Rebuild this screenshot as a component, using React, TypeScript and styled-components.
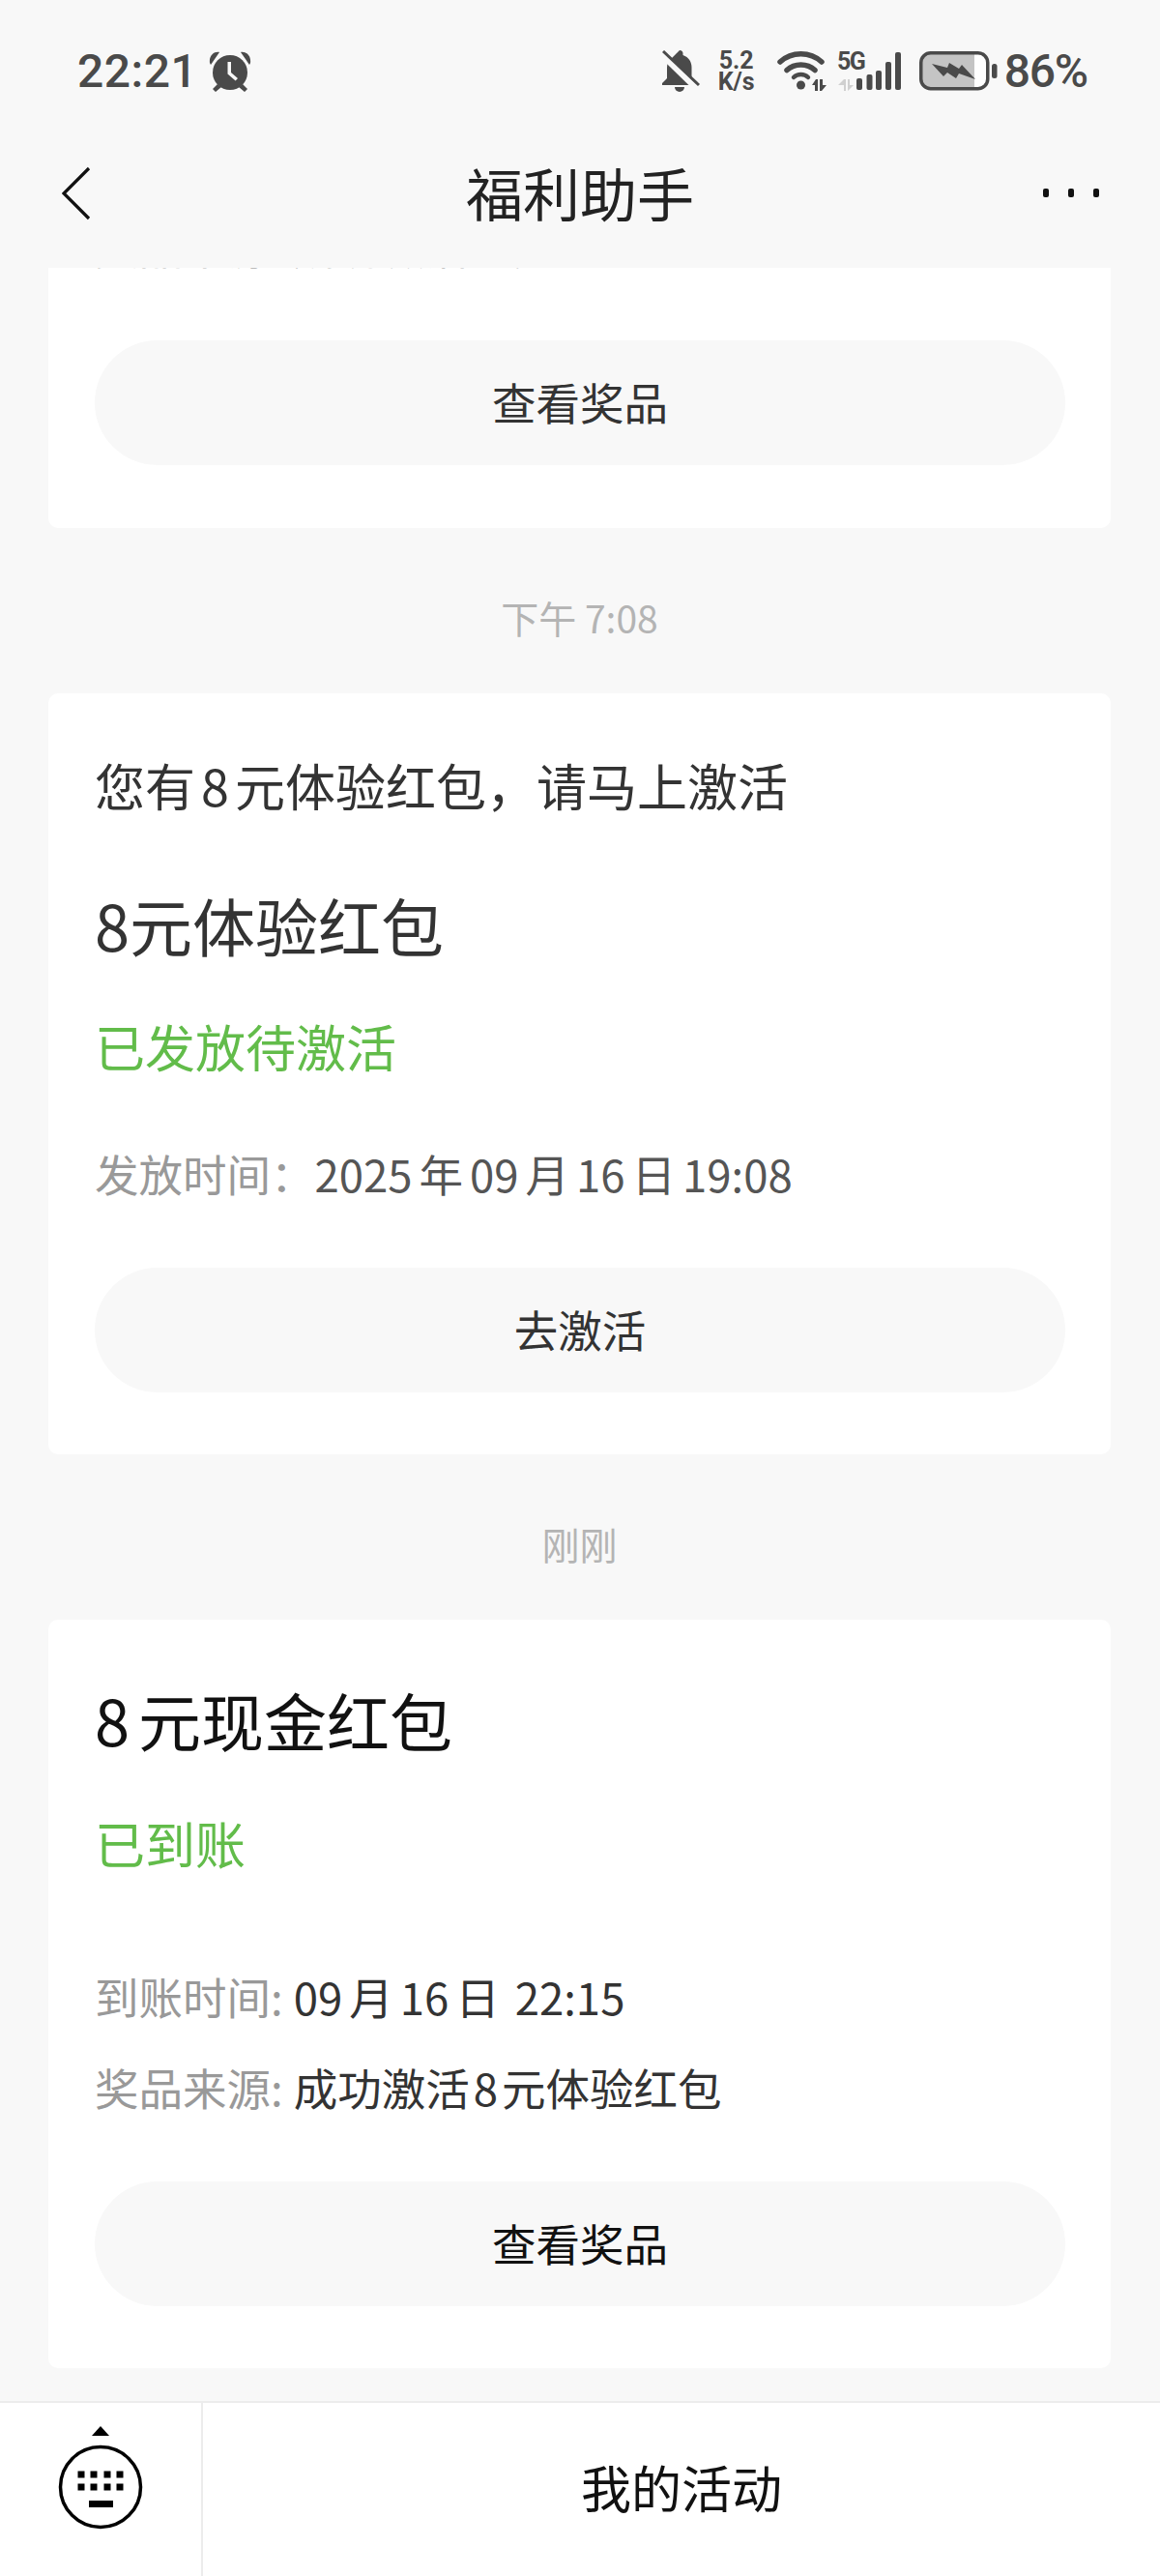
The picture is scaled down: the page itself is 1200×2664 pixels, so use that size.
import React from "react";
import styled, { createGlobalStyle } from "styled-components";

const Global = createGlobalStyle`
  html, body { margin: 0; padding: 0; background: #f8f8f8; }
  * { box-sizing: border-box; }
`;

const CJK = `"Noto Sans CJK SC", "Noto Sans", sans-serif`;
const NUM = `Roboto, "Noto Sans CJK SC", sans-serif`;

const Page = styled.div`
  width: 1200px;
  height: 2664px;
  display: flex;
  flex-direction: column;
  overflow: hidden;
  background: #f8f8f8;
  font-family: ${CJK};
`;
const StatusBar = styled.div`
  height: 147px;
  flex: none;
  display: flex;
  align-items: center;
  justify-content: space-between;
  padding: 0 75px 0 80px;
  color: #4a4a4a;
`;
const StatusGroup = styled.div`
  display: flex;
  align-items: center;
`;
const StatusItem = styled.div<{ $ml: number }>`
  display: flex;
  margin-left: ${(p) => p.$ml}px;
`;
const Clock = styled.span`
  font: 500 48px/1 ${NUM};
  letter-spacing: 0.5px;
`;
const Percent = styled.span`
  font: 500 48px/1 ${NUM};
  letter-spacing: -1.2px;
`;
const Speed = styled.div`
  width: 42px;
  display: flex;
  flex-direction: column;
  align-items: center;
  font: 700 25px/22px ${NUM};
`;
const NavBar = styled.div`
  height: 130px;
  flex: none;
  display: grid;
  grid-template-columns: 1fr auto 1fr;
  align-items: center;
  padding: 0 62px 26px;
`;
const NavStart = styled.div`
  display: flex;
  padding: 2px 0 0 2px;
`;
const NavEnd = styled.div`
  display: flex;
  justify-content: flex-end;
  padding-top: 2px;
`;
const NavTitle = styled.div`
  font-size: 59px;
  line-height: 76px;
  color: #222;
`;
const Feed = styled.div`
  flex: 1;
  min-height: 0;
  overflow: hidden;
  padding: 0 51px 0 50px;
`;
const Card = styled.div<{ $top: number }>`
  background: #fff;
  border-radius: 10px;
  padding: ${(p) => p.$top}px 47px 64px 48px;
`;
const TopCard = styled(Card)`
  border-radius: 0 0 10px 10px;
  padding-bottom: 65px;
`;
const Clipped = styled.div`
  height: 3px;
  margin-bottom: 72px;
  overflow: hidden;
  display: flex;
  align-items: flex-end;
  font-size: 45.5px;
  line-height: 51px;
  color: #bbb;
  white-space: nowrap;
`;
const Stamp = styled.div`
  margin: 62px 0 49px;
  text-align: center;
  font-size: 39px;
  line-height: 60px;
  color: #b4b4b4;
`;
const Gap = styled.span<{ $w: number }>`
  display: inline-block;
  width: ${(p) => p.$w}px;
`;
const Lead = styled.div`
  font-size: 52px;
  line-height: 60px;
  white-space: nowrap;
  color: #333;
`;
const Title = styled.div<{ $mt: number; $dark?: boolean }>`
  margin-top: ${(p) => p.$mt}px;
  font-size: 65px;
  line-height: 80px;
  color: ${(p) => (p.$dark ? "#111" : "#333")};
`;
const Status = styled.div<{ $mt: number }>`
  margin-top: ${(p) => p.$mt}px;
  font-size: 52px;
  line-height: 70px;
  color: #62bc4a;
`;
const Meta = styled.div<{ $mt: number; $dark?: boolean }>`
  margin-top: ${(p) => p.$mt}px;
  font-size: 45.5px;
  line-height: 60px;
  white-space: nowrap;
  color: ${(p) => (p.$dark ? "#333" : "#555")};
`;
const MetaLabel = styled.span`
  color: #999;
`;
const Action = styled.div<{ $mt: number; $dark?: boolean }>`
  margin-top: ${(p) => p.$mt}px;
  height: 129px;
  border-radius: 65px;
  background: #f8f8f8;
  display: flex;
  align-items: center;
  justify-content: center;
  padding-bottom: 4px;
  font-size: 45.5px;
  color: ${(p) => (p.$dark ? "#111" : "#333")};
`;
const BottomBar = styled.div`
  height: 181px;
  flex: none;
  display: flex;
  background: #fff;
  border-top: 2px solid #ececec;
`;
const KeyboardCell = styled.div`
  width: 210px;
  flex: none;
  display: flex;
  justify-content: center;
  padding-top: 24px;
  border-right: 2px solid #ececec;
`;
const MenuCell = styled.div`
  flex: 1;
  display: flex;
  align-items: center;
  justify-content: center;
  padding-bottom: 6px;
  font-size: 52px;
  color: #111;
`;

const AlarmIcon = () => (
  <svg width="44" height="44" viewBox="0 0 44 44" fill="#4a4a4a">
    <path d="M1 13C0 5 6 1 11 2L2 15ZM43 13C44 5 38 1 33 2L42 15Z" />
    <circle cx="22" cy="23" r="18" />
    <path d="M9 35l-5 5 3 3 6-5zM35 35l5 5-3 3-6-5z" />
    <path d="M19.5 12h3.5v11l7 6-2.4 2.4-8.100-7z" fill="#f8f8f8" />
  </svg>
);
const BellOff = () => (
  <svg width="40" height="44" viewBox="0 0 40 44" fill="#4a4a4a">
    <path d="M18 0a3.500 3.500 0 0 1 3.500 3.500V5c6 2 9 7 9 13v11l5 5v2H0v-2l5-5V18c0-2 .4-4 1-6z" />
    <path d="M13 38h10a5 5 0 0 1-10 0z" />
    <path d="M-1 4l37 36" stroke="#f8f8f8" strokeWidth="6" />
    <path d="M1 1l37 35" stroke="#4a4a4a" strokeWidth="3" />
  </svg>
);
const Wifi = () => (
  <svg width="52" height="42" viewBox="0 0 52 42" fill="none">
    <path d="M3 11C15 0 34 0 46 11" stroke="#4a4a4a" strokeWidth="5.500" strokeLinecap="round" />
    <path d="M10 19.500C18 12 31 12 39 19.500" stroke="#4a4a4a" strokeWidth="5.500" strokeLinecap="round" />
    <path d="M17 27C21 23 28 23 32 27" stroke="#4a4a4a" strokeWidth="4.500" strokeLinecap="round" />
    <circle cx="24.500" cy="35" r="4.500" fill="#4a4a4a" />
    <path d="M36 35l4-6h2v12h-3v-6zM44 29h3v6h4l-5 6h-2z" fill="#4a4a4a" />
  </svg>
);
const Signal = () => (
  <svg width="68" height="42" viewBox="0 0 68 42" fill="#4a4a4a" overflow="visible">
    <text x="0" y="19" fontFamily="Roboto, sans-serif" fontWeight="700" fontSize="25" letterSpacing="-1.500">5G</text>
    <path d="M1 35l6-6h2v12H7v-6zM11 29h2v6h4l-6 6z" fill="#d0d0d0" />
    <rect x="20" y="28" width="6" height="12" rx="2" />
    <rect x="30.500" y="24" width="6" height="16" rx="2" />
    <rect x="40" y="20" width="6" height="20" rx="2" />
    <rect x="50" y="11" width="6" height="29" rx="2" />
    <rect x="60" y="1" width="6" height="39" rx="2" />
  </svg>
);
const Battery = () => (
  <svg width="82" height="42" viewBox="0 0 82 42">
    <rect x="3" y="3" width="67" height="35" rx="8" fill="#fff" />
    <path d="M9 3h48v35H9a6 6 0 0 1-6-6V9a6 6 0 0 1 6-6z" fill="#c4c4c4" />
    <rect x="1.750" y="1.750" width="69" height="37" rx="10" fill="none" stroke="#4a4a4a" strokeWidth="3.500" />
    <rect x="75" y="13" width="5.500" height="15" rx="2.500" fill="#4a4a4a" />
    <path d="M13 13l16 4 2-5 10 6 3-4 14 15-17-6-3 5-9-6-4 4z" fill="#4a4a4a" />
  </svg>
);
const Back = () => (
  <svg width="30" height="56" viewBox="0 0 30 56" fill="none">
    <path d="M28 2L2 28l26 26" stroke="#111" strokeWidth="3.200" />
  </svg>
);
const More = () => (
  <svg width="60" height="10" viewBox="0 0 60 10" fill="#111">
    <rect x="1" y="0" width="6" height="9" rx="2" />
    <rect x="27" y="0" width="6" height="9" rx="2" />
    <rect x="53" y="0" width="6" height="9" rx="2" />
  </svg>
);
const Keyboard = () => (
  <svg width="90" height="108" viewBox="0 0 90 108" fill="#000">
    <path d="M36 10l9-10 9 10z" />
    <circle cx="45" cy="63" r="41.500" fill="none" stroke="#000" strokeWidth="3.500" />
    {[50, 63].map((y) =>
      [25, 38, 52, 65].map((x) => <rect key={`${x}-${y}`} x={x - 3.5} y={y - 3.5} width="7" height="7" />)
    )}
    <rect x="33" y="77" width="25" height="7" />
  </svg>
);

export default function App() {
  return (
    <Page>
      <Global />
      <StatusBar>
        <StatusGroup>
          <Clock>22:21</Clock>
          <StatusItem $ml={12}>
            <AlarmIcon />
          </StatusItem>
        </StatusGroup>
        <StatusGroup>
          <StatusItem $ml={0}>
            <BellOff />
          </StatusItem>
          <StatusItem $ml={16}>
            <Speed>
              <span>5.2</span>
              <span>K/s</span>
            </Speed>
          </StatusItem>
          <StatusItem $ml={21}>
            <Wifi />
          </StatusItem>
          <StatusItem $ml={10}>
            <Signal />
          </StatusItem>
          <StatusItem $ml={17}>
            <Battery />
          </StatusItem>
          <StatusItem $ml={6}>
            <Percent>86%</Percent>
          </StatusItem>
        </StatusGroup>
      </StatusBar>
      <NavBar>
        <NavStart>
          <Back />
        </NavStart>
        <NavTitle>福利助手</NavTitle>
        <NavEnd>
          <More />
        </NavEnd>
      </NavBar>
      <Feed>
        <TopCard $top={0}>
          <Clipped>奖品来源: 成功激活 8 元红包</Clipped>
          <Action $mt={0}>查看奖品</Action>
        </TopCard>
        <Stamp>下午 7:08</Stamp>
        <Card $top={65}>
          <Lead>
            您有<Gap $w={6} />8<Gap $w={6} />元体验红包，请马上激活
          </Lead>
          <Title $mt={74}>8元体验红包</Title>
          <Status $mt={51}>已发放待激活</Status>
          <Meta $mt={66}>
            <MetaLabel>发放时间：</MetaLabel>
            2025<Gap $w={7} />年<Gap $w={7} />09<Gap $w={7} />月<Gap $w={7} />16<Gap $w={7} />日<Gap $w={7} />19:08
          </Meta>
          <Action $mt={68}>去激活</Action>
        </Card>
        <Stamp>刚刚</Stamp>
        <Card $top={63}>
          <Title $mt={0} $dark>
            8<Gap $w={9} />元现金红包
          </Title>
          <Status $mt={53}>已到账</Status>
          <Meta $mt={93} $dark>
            <MetaLabel>到账时间:</MetaLabel>
            <Gap $w={11} />
            09<Gap $w={7} />月<Gap $w={7} />16<Gap $w={7} />日<Gap $w={16} />22:15
          </Meta>
          <Meta $mt={34} $dark>
            <MetaLabel>奖品来源:</MetaLabel>
            <Gap $w={11} />
            成功激活<Gap $w={4} />8<Gap $w={4} />元体验红包
          </Meta>
          <Action $mt={68} $dark>
            查看奖品
          </Action>
        </Card>
      </Feed>
      <BottomBar>
        <KeyboardCell>
          <Keyboard />
        </KeyboardCell>
        <MenuCell>我的活动</MenuCell>
      </BottomBar>
    </Page>
  );
}
